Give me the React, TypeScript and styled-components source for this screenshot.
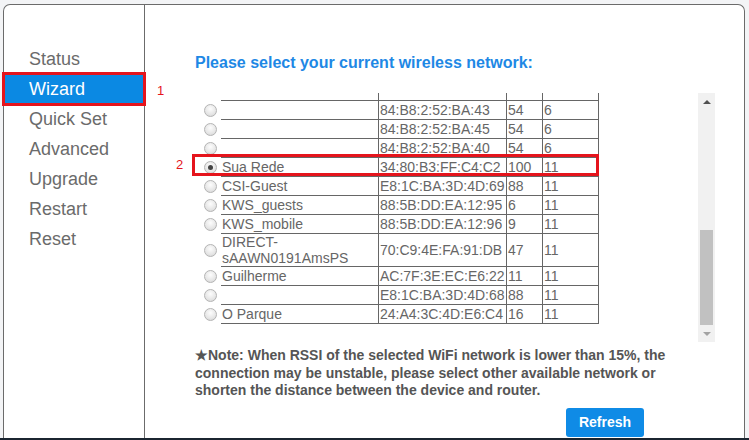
import styled, { createGlobalStyle } from 'styled-components'

const GlobalStyle = createGlobalStyle`
  * {
    box-sizing: border-box;
  }
  html, body {
    margin: 0;
    padding: 0;
    background: #f3f4f6;
    font-family: "Liberation Sans", Arial, sans-serif;
  }
`

const Page = styled.div`
  height: 440px;
  display: flex;
  flex-direction: column;
`

const Frame = styled.div`
  position: relative;
  flex: 1;
  margin: 4px 4px 0 3px;
  display: flex;
  background: #fff;
  border: 1px solid #6b6b6b;
  border-bottom: none;
  border-radius: 7px 7px 0 0;
`

const Strip = styled.div`
  height: 2px;
  background: #1b2530;
`

const Sidebar = styled.nav`
  width: 141px;
  flex-shrink: 0;
  border-right: 1px solid #6b6b6b;
  padding-top: 39px;
  display: flex;
  flex-direction: column;
`

const MenuItem = styled.div<{ $active?: boolean }>`
  height: 30px;
  line-height: 30px;
  padding-left: 25px;
  font-size: 18px;
  color: ${(p) => (p.$active ? '#fff' : '#6b6b6b')};
  background: ${(p) => (p.$active ? '#0b89e3' : 'transparent')};
  outline: ${(p) => (p.$active ? '3px solid #e5141c' : 'none')};
  outline-offset: -1px;
`

const Content = styled.main`
  flex: 1;
  padding: 48px 0 0 51px;
  display: flex;
  flex-direction: column;
`

const Heading = styled.h2`
  margin: 0 0 0 -1px;
  font-size: 16px;
  line-height: 20px;
  font-weight: bold;
  color: #1e88e5;
`

const ListBox = styled.div`
  margin-top: 20px;
  width: 519px;
  height: 249px;
  display: flex;
`

const Viewport = styled.div`
  flex: 1;
  overflow: hidden;
  display: flex;
  flex-direction: column;
  justify-content: flex-end;
  padding-bottom: 18px;
`

const Table = styled.table`
  border-collapse: separate;
  border-spacing: 0;
  table-layout: fixed;
  width: 403px;
  flex-shrink: 0;
  font-size: 14px;
  color: #666;
`

const Cell = styled.td<{ $w: number; $lift?: boolean }>`
  width: ${(p) => p.$w}px;
  height: 19px;
  padding: 0 1px ${(p) => (p.$lift ? '8px' : '0')};
  line-height: 16px;
  vertical-align: middle;
  border-bottom: 1px solid #666;
  border-right: 1px solid #666;
  white-space: pre-line;
`

const RadioCell = styled.td`
  width: 25px;
  padding: 0 0 0 8px;
  vertical-align: middle;
`

const Radio = styled.span<{ $checked?: boolean }>`
  display: block;
  width: 13px;
  height: 13px;
  border-radius: 50%;
  border: 1px solid #b4b4b4;
  background: radial-gradient(circle at 50% 35%, #fdfdfd 0%, #e6e6e6 60%, #d2d2d2 100%);
  position: relative;

  &::after {
    content: '';
    display: ${(p) => (p.$checked ? 'block' : 'none')};
    position: absolute;
    left: 3px;
    top: 3px;
    width: 5px;
    height: 5px;
    border-radius: 50%;
    background: #444;
  }
`

const Scrollbar = styled.div`
  width: 17px;
  flex-shrink: 0;
  background: #f1f1f1;
  display: flex;
  flex-direction: column;
`

const ArrowButton = styled.div`
  height: 17px;
  display: flex;
  align-items: center;
  justify-content: center;
`

const Arrow = styled.span<{ $down?: boolean; $disabled?: boolean }>`
  width: 0;
  height: 0;
  border-left: 4px solid transparent;
  border-right: 4px solid transparent;
  ${(p) =>
    p.$down
      ? `border-top: 4px solid ${p.$disabled ? '#a3a3a3' : '#505050'};`
      : `border-bottom: 4px solid ${p.$disabled ? '#a3a3a3' : '#505050'};`}
`

const Track = styled.div`
  flex: 1;
  display: flex;
  flex-direction: column;
  justify-content: flex-end;
  padding: 0 2px;
`

const Thumb = styled.div`
  height: 95px;
  background: #c1c1c1;
`

const Note = styled.p`
  margin: 5px 0 0 -1px;
  width: 490px;
  font-size: 14px;
  line-height: 17.5px;
  font-weight: bold;
  color: #555;
`

const RefreshButton = styled.button`
  margin: 8px 0 0 370px;
  width: 78px;
  height: 29px;
  border: none;
  border-radius: 3px;
  background: #0f8be6;
  color: #fff;
  font-family: "Liberation Sans", Arial, sans-serif;
  font-size: 14px;
  font-weight: bold;
  padding: 0;
`

const StepLabel = styled.span<{ $x: number; $y: number }>`
  position: absolute;
  left: ${(p) => p.$x}px;
  top: ${(p) => p.$y}px;
  font-size: 13px;
  line-height: 16px;
  color: #e5141c;
`

const Highlight = styled.div`
  position: absolute;
  left: 188px;
  top: 149px;
  width: 407px;
  height: 22px;
  border: 3px solid #e5141c;
  pointer-events: none;
`

const menu = ['Status', 'Wizard', 'Quick Set', 'Advanced', 'Upgrade', 'Restart', 'Reset']

type Network = {
  ssid: string
  mac: string
  rssi: string
  ch: string
  checked?: boolean
  lift?: boolean
}

const networks: Network[] = [
  { ssid: 'NET_2G4A1F', mac: '00:1A:2B:7C:11:0E', rssi: '23', ch: '1' },
  { ssid: 'VIVO-8A20', mac: 'C8:5A:9F:21:8A:20', rssi: '31', ch: '1' },
  { ssid: 'Casa_Oliveira', mac: '10:62:EB:4F:90:13', rssi: '19', ch: '3' },
  { ssid: 'Escritorio', mac: 'F4:F2:6D:0B:22:71', rssi: '42', ch: '6' },
  { ssid: 'TP-LINK_Extender_\n2016', mac: '84:B8:2:52:BA:41', rssi: '54', ch: '6', lift: true },
  { ssid: '', mac: '84:B8:2:52:BA:43', rssi: '54', ch: '6' },
  { ssid: '', mac: '84:B8:2:52:BA:45', rssi: '54', ch: '6' },
  { ssid: '', mac: '84:B8:2:52:BA:40', rssi: '54', ch: '6' },
  { ssid: 'Sua Rede', mac: '34:80:B3:FF:C4:C2', rssi: '100', ch: '11', checked: true },
  { ssid: 'CSI-Guest', mac: 'E8:1C:BA:3D:4D:69', rssi: '88', ch: '11' },
  { ssid: 'KWS_guests', mac: '88:5B:DD:EA:12:95', rssi: '6', ch: '11' },
  { ssid: 'KWS_mobile', mac: '88:5B:DD:EA:12:96', rssi: '9', ch: '11' },
  { ssid: 'DIRECT-sAAWN0191AmsPS', mac: '70:C9:4E:FA:91:DB', rssi: '47', ch: '11' },
  { ssid: 'Guilherme', mac: 'AC:7F:3E:EC:E6:22', rssi: '11', ch: '11' },
  { ssid: '', mac: 'E8:1C:BA:3D:4D:68', rssi: '88', ch: '11' },
  { ssid: 'O Parque', mac: '24:A4:3C:4D:E6:C4', rssi: '16', ch: '11' },
]

const App = () => (
  <>
    <GlobalStyle />
    <Page>
      <Frame>
        <Sidebar>
          {menu.map((m) => (
            <MenuItem key={m} $active={m === 'Wizard'}>
              {m}
            </MenuItem>
          ))}
        </Sidebar>

        <Content>
          <Heading>Please select your current wireless network:</Heading>

          <ListBox>
            <Viewport>
              <Table>
                <tbody>
                  {networks.map((n) => (
                    <tr key={n.mac}>
                      <RadioCell>
                        <Radio $checked={n.checked} />
                      </RadioCell>
                      <Cell $w={158} $lift={n.lift}>{n.ssid}</Cell>
                      <Cell $w={128} $lift={n.lift}>{n.mac}</Cell>
                      <Cell $w={36} $lift={n.lift}>{n.rssi}</Cell>
                      <Cell $w={56} $lift={n.lift}>{n.ch}</Cell>
                    </tr>
                  ))}
                </tbody>
              </Table>
            </Viewport>
            <Scrollbar>
              <ArrowButton>
                <Arrow />
              </ArrowButton>
              <Track>
                <Thumb />
              </Track>
              <ArrowButton>
                <Arrow $down $disabled />
              </ArrowButton>
            </Scrollbar>
          </ListBox>

          <Note>
            ★Note: When RSSI of the selected WiFi network is lower than 15%, the connection may be
            unstable, please select other available network or shorten the distance between the
            device and router.
          </Note>

          <RefreshButton>Refresh</RefreshButton>
        </Content>

        <StepLabel $x={153} $y={78}>1</StepLabel>
        <StepLabel $x={172} $y={152}>2</StepLabel>
        <Highlight />
      </Frame>
      <Strip />
    </Page>
  </>
)

export default App
